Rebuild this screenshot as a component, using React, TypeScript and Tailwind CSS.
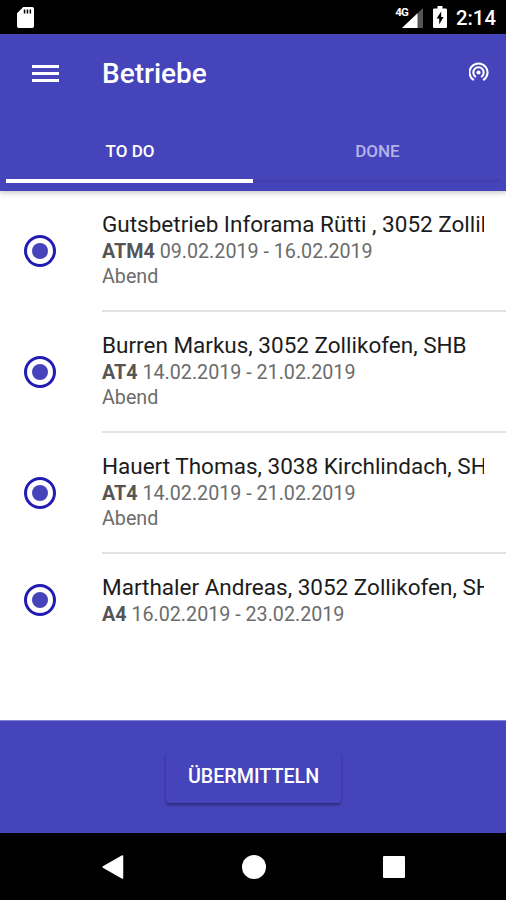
import React from "react";

type Entry = { title: string; code: string; dates: string; note?: string };

const entries: Entry[] = [
  { title: "Gutsbetrieb Inforama Rütti , 3052 Zollikofen", code: "ATM4", dates: "09.02.2019 - 16.02.2019", note: "Abend" },
  { title: "Burren Markus, 3052 Zollikofen, SHB", code: "AT4", dates: "14.02.2019 - 21.02.2019", note: "Abend" },
  { title: "Hauert Thomas, 3038 Kirchlindach, SHB", code: "AT4", dates: "14.02.2019 - 21.02.2019", note: "Abend" },
  { title: "Marthaler Andreas, 3052 Zollikofen, SHB", code: "A4", dates: "16.02.2019 - 23.02.2019" },
];

function StatusBar() {
  return (
    <div className="flex h-[34px] shrink-0 items-center bg-black pl-[17px] pr-[12px] text-white">
      <svg className="mt-px h-[21px] w-[17px]" viewBox="0 0 17 21" fill="#fff">
        <path
          fillRule="evenodd"
          d="M6.3 0H15.2Q17 0 17 1.8V19.2Q17 21 15.2 21H1.8Q0 21 0 19.2V6.3ZM6.8 2.6V6.4H8.3V2.6ZM9.7 2.6V6.4H11.2V2.6ZM12.6 2.6V6.4H14.1V2.6Z"
        />
      </svg>
      <div className="grow" />
      <div className="flex h-[22px] items-start">
        <span className="-mr-[7px] mt-px text-[11.5px] font-bold leading-[11px] tracking-[-0.8px]">4G</span>
        <svg className="mt-[2px] h-[20px] w-[22px]" viewBox="0 0 22 20">
          <path d="M22 0V20H1Z" fill="#555" />
          <path d="M16.5 5.2V20H1Z" fill="#fff" />
        </svg>
      </div>
      <svg className="ml-[10px] h-[22px] w-[14px]" viewBox="0 0 14 22">
        <path d="M4.5 0H9.5V2.5H12.8Q14 2.5 14 3.7V20.8Q14 22 12.8 22H1.2Q0 22 0 20.8V3.7Q0 2.5 1.2 2.5H4.5Z" fill="#fff" />
        <path d="M8.2 5.5L3.6 12.5H6.2V18.5L10.6 11H8.2Z" fill="#000" />
      </svg>
      <span className="ml-[9px] mt-[2px] w-[38px] whitespace-nowrap text-[20.3px] font-medium leading-[22px]">2:14</span>
    </div>
  );
}

function TetheringIcon() {
  return (
    <svg className="mb-[3px] h-[20px] w-[20px]" viewBox="0 0 20 20" fill="none" stroke="#fff" strokeWidth="2.1">
      <circle cx="9.5" cy="10.5" r="2.1" fill="#fff" stroke="none" />
      <path d="M6.9 15A5.2 5.2 0 1 1 12.1 15" />
      <path d="M4.9 18.2A9 9 0 1 1 14.1 18.2" />
    </svg>
  );
}

function Header() {
  return (
    <header className="relative z-10 h-[157px] shrink-0 bg-[#4644bb] text-white shadow-[0_2px_5px_rgba(0,0,0,0.22)]">
      <div className="flex h-[79px] items-center pl-8 pr-[17px]">
        <button className="flex w-[27px] flex-col gap-1" aria-label="Menu">
          <span className="h-[3px] bg-white" />
          <span className="h-[3px] bg-white" />
          <span className="h-[3px] bg-white" />
        </button>
        <h1 className="ml-[43px] grow text-[28px] font-medium leading-8">Betriebe</h1>
        <TetheringIcon />
      </div>
      <div className="flex h-[70px] px-[6px] text-[17px] font-medium">
        <div className="flex h-full w-[247px] items-center justify-center border-b-4 border-white pl-px pt-[11px]">TO DO</div>
        <div className="flex h-full w-[247px] items-center justify-center border-b-4 border-[#4240b0] pl-[2px] pt-[11px] text-[#b5b4e6]">DONE</div>
      </div>
    </header>
  );
}

function Row({ entry, last }: { entry: Entry; last: boolean }) {
  return (
    <li className="flex">
      <div className={`flex w-[102px] shrink-0 items-center pl-6 ${last ? "h-[93px]" : "h-[121px]"}`}>
        <span className="mb-px flex h-8 w-8 items-center justify-center rounded-full border-[3px] border-[#211cb2]">
          <span className="h-4 w-4 rounded-full bg-[#4644bb]" />
        </span>
      </div>
      <div className={`min-w-0 grow pr-[22px] pt-[20px] ${last ? "h-[93px]" : "h-[121px] border-b-2 border-[#e2e2e2]"}`}>
        <div className="overflow-hidden whitespace-nowrap text-[22.5px] leading-[27px] text-[#1c1c1c]">{entry.title}</div>
        <div className="mt-px whitespace-nowrap text-[19.7px] leading-[25px] text-[#6c6c6c]">
          <b className="font-bold text-[#555]">{entry.code}</b> {entry.dates}
        </div>
        {entry.note && <div className="text-[19.7px] leading-[26px] text-[#6c6c6c]">{entry.note}</div>}
      </div>
    </li>
  );
}

export default function App() {
  return (
    <div className="flex h-[900px] w-[506px] flex-col overflow-hidden bg-white font-['Roboto',sans-serif]">
      <StatusBar />
      <Header />
      <ul className="grow">
        {entries.map((entry, i) => (
          <Row key={entry.title} entry={entry} last={i === entries.length - 1} />
        ))}
      </ul>
      <footer className="flex h-[113px] shrink-0 items-center justify-center border-t border-[#8382d0] bg-[#4644bb]">
        <button className="h-[51px] w-[175px] rounded-[3px] bg-[#4644bb] pl-px text-[19.7px] font-medium text-white shadow-[0_2px_3px_rgba(0,0,0,0.38)]">
          ÜBERMITTELN
        </button>
      </footer>
      <nav className="flex h-[67px] shrink-0 items-center justify-between bg-black pl-[102px] pr-[101px]">
        <svg className="h-6 w-[22px]" viewBox="0 0 22 24">
          <path d="M20.5 1V23L1.2 12Z" fill="#fff" stroke="#fff" strokeWidth="1.5" strokeLinejoin="round" />
        </svg>
        <span className="h-6 w-6 rounded-full bg-white" />
        <span className="h-[22px] w-[22px] rounded-[1px] bg-white" />
      </nav>
    </div>
  );
}
